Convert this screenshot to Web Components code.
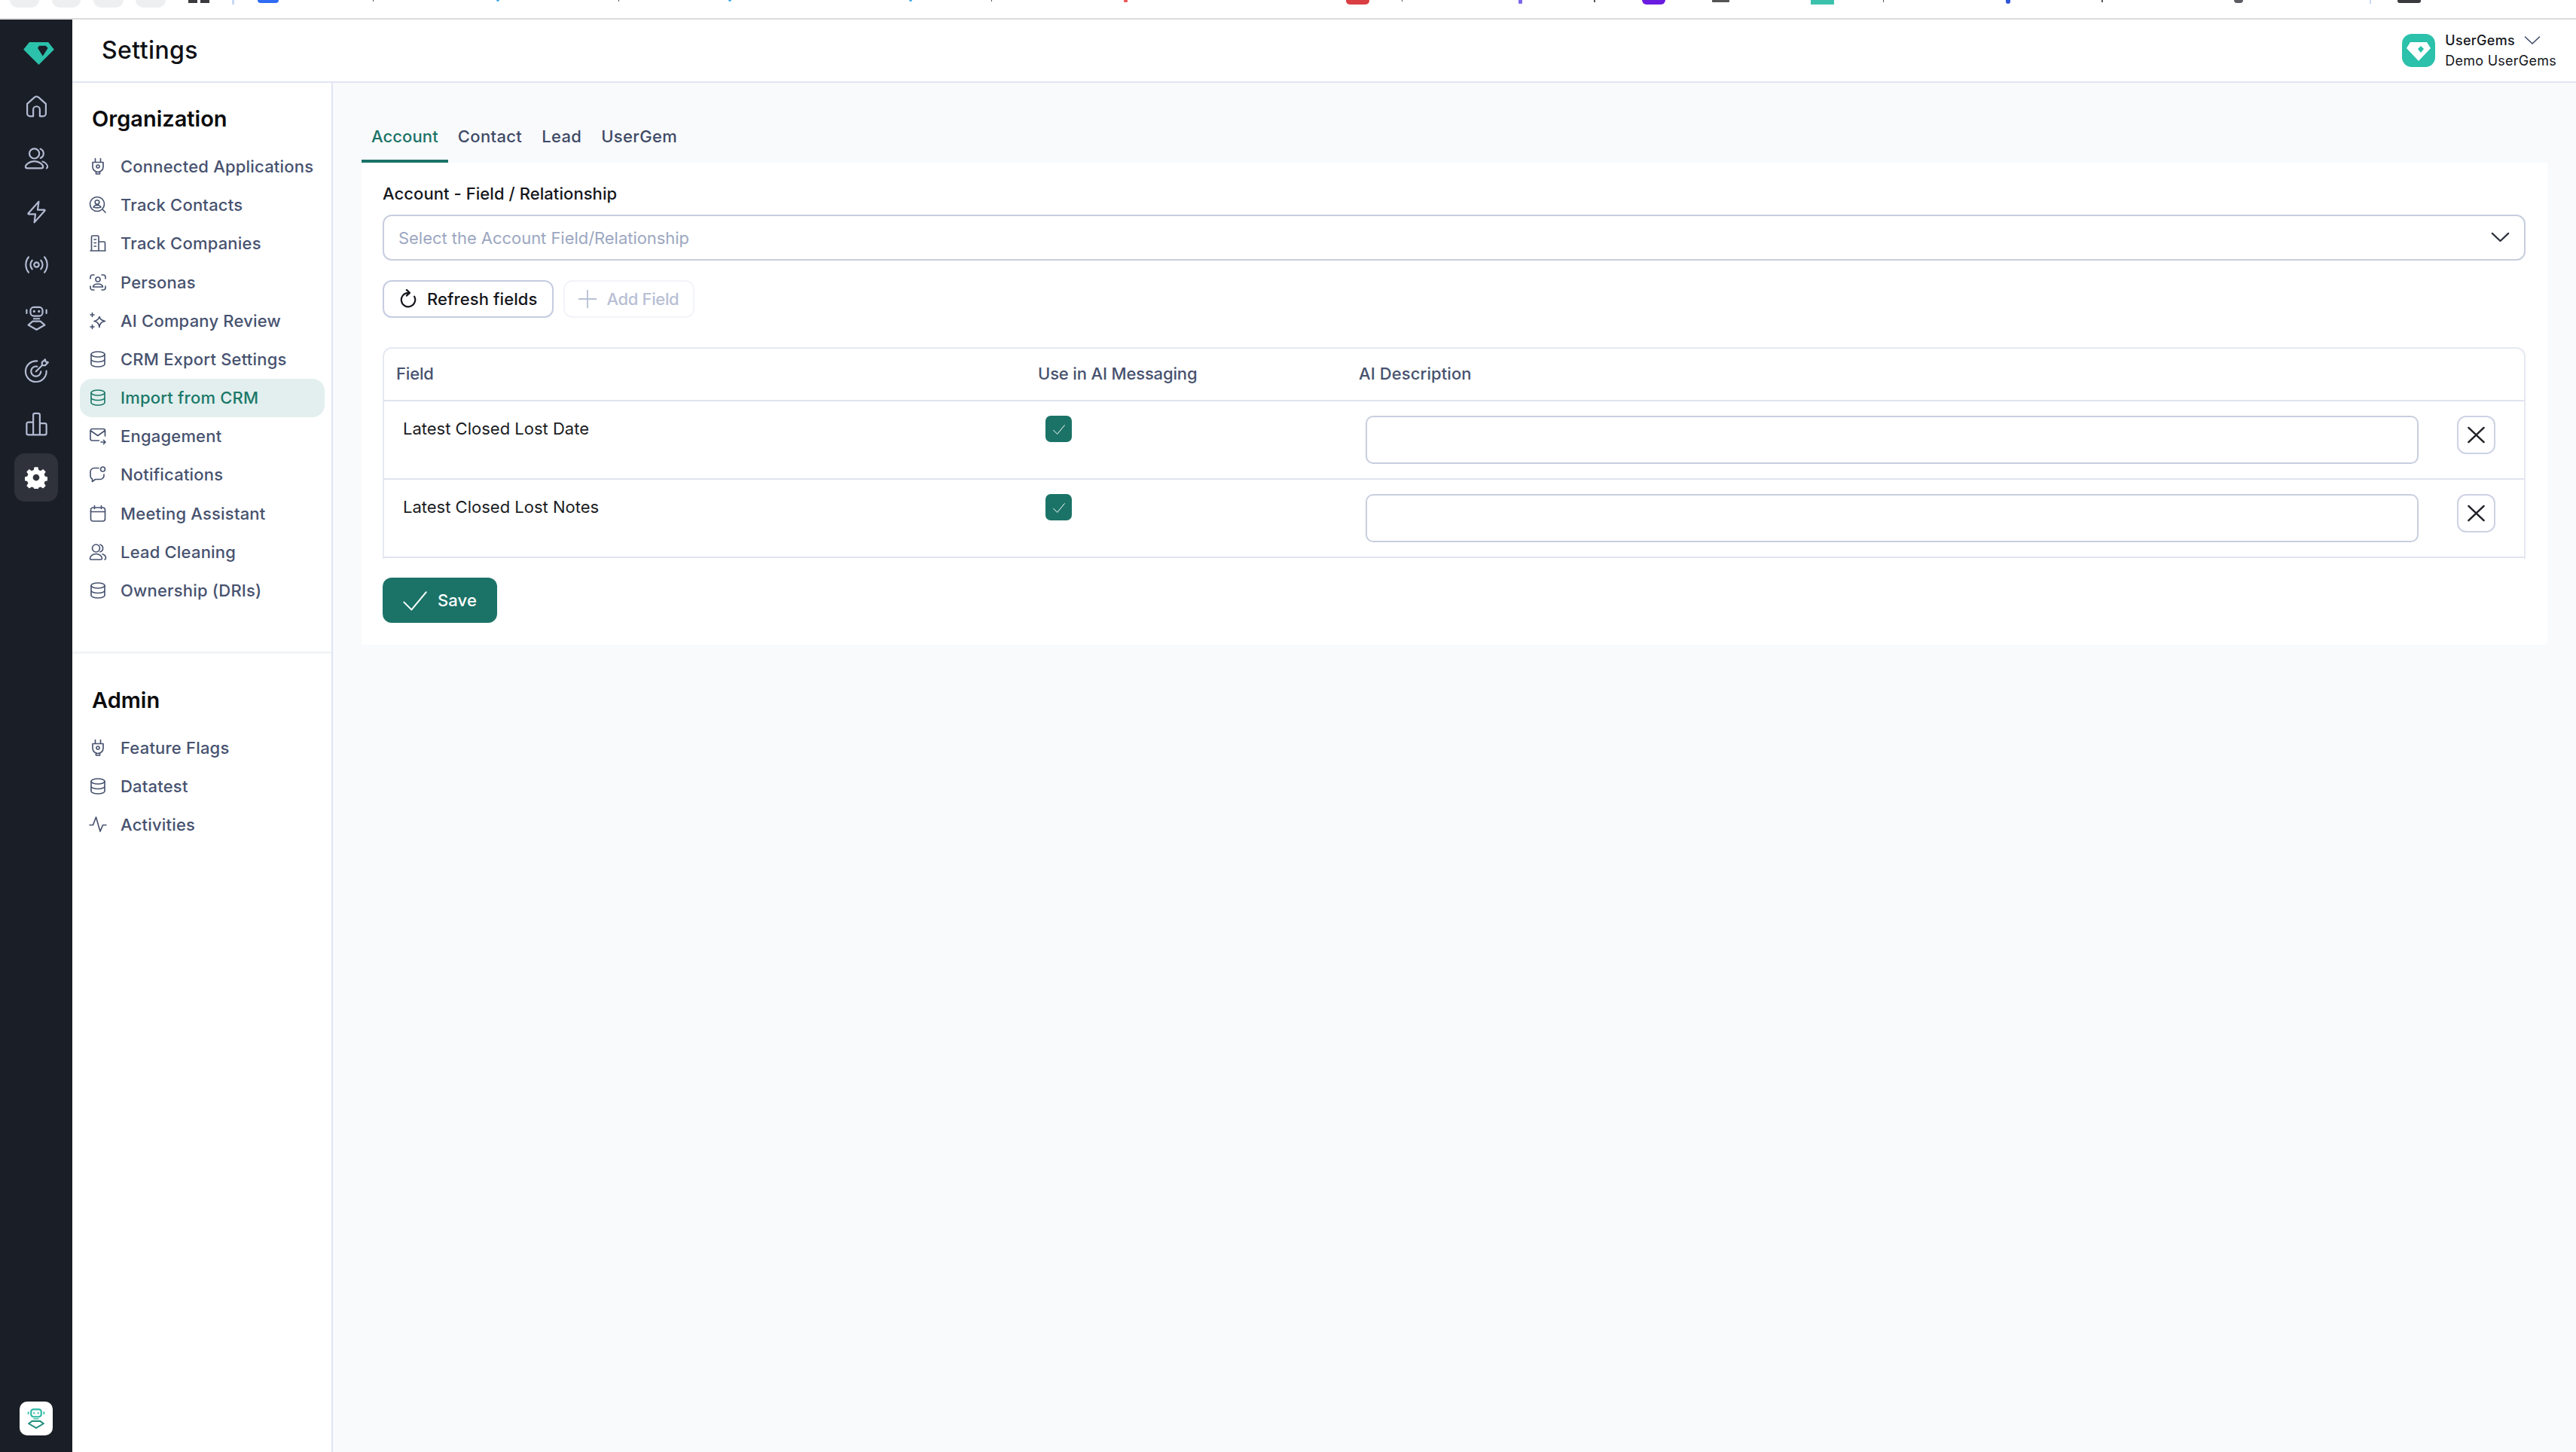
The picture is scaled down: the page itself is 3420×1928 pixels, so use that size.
<!DOCTYPE html>
<html>
<head>
<meta charset="utf-8">
<title>Settings</title>
<style>
    html, body { margin: 0; height: 1928px; overflow: hidden; background: #fff; font-family: Inter, "Noto Sans", sans-serif; }
</style>
</head>
<body>
<app-shell></app-shell>
<script>
const ICONS = {
    home: '<path d="M3.5 10.2 10 4.4a3 3 0 0 1 4 0l6.5 5.8V19a2.5 2.5 0 0 1-2.5 2.5h-3v-6a3 3 0 0 0-6 0v6H6A2.5 2.5 0 0 1 3.500 19z"/>',
    users: '<circle cx="10" cy="7.500" r="4.500"/><path d="M15.500 3.200a4.500 4.500 0 0 1 0 8.400M2 19.500c0-1.500 3-5 8-5s8 3.500 8 5c0 .8-.6 1.300-1.500 1.300h-13C2.600 20.800 2 20.300 2 19.500zM17.500 14.800c2.400.8 4.500 2.800 4.500 4.700 0 .6-.3 1-.8 1.300"/>',
    bolt: '<path d="M14 2.500 4.500 13.200a.5.5 0 0 0 .4.8H11l-1 7.500 9.500-10.700a.5.5 0 0 0-.4-.8H13z"/>',
    radio: '<circle cx="12" cy="12" r="2.200"/><path d="M8 8a6 6 0 0 0 0 8M16 8a6 6 0 0 1 0 8M4.800 5a11 11 0 0 0 0 14M19.200 5a11 11 0 0 1 0 14"/>',
    robot: '<rect x="6.500" y="2" width="11" height="8" rx="3"/><path d="M9.800 5.800h.01M14.200 5.800h.01" stroke-width="2.200"/><path d="M3 4.500v3M21 4.500v3M9.500 12.500h5M8.500 14.800h7l4 3.400-7.500 4.300-7.500-4.300z"/>',
    target: '<path d="M12.500 3a9.500 9.500 0 1 0 8.500 9M12.500 8a4.500 4.500 0 1 0 3.500 4.500M11.500 12.500l5.500-5.500M17 7V4.200L19.800 1.500l.5 2.200 2.200.5L19.800 7z"/>',
    bars: '<path d="M3 11.500A1.500 1.500 0 0 1 4.500 10H9V3.500A1.500 1.500 0 0 1 10.500 2h3A1.500 1.500 0 0 1 15 3.500V11h4.500a1.500 1.500 0 0 1 1.500 1.500V20a1.500 1.500 0 0 1-1.500 1.500h-15A1.500 1.500 0 0 1 3 20zM9 10v11.500M15 11v10.500"/>',
    gear: '<path fill="currentColor" stroke="none" fill-rule="evenodd" d="M10 1.500h4l.6 3 2.200.9 2.600-1.700 2.800 2.800-1.700 2.600.9 2.200 3 .6v4l-3 .6-.9 2.200 1.700 2.600-2.800 2.800-2.600-1.700-2.200.9-.6 3h-4l-.6-3-2.200-.9-2.600 1.700-2.800-2.800 1.700-2.600-.9-2.200-3-.6v-4l3-.6.9-2.200-1.700-2.600 2.800-2.800 2.600 1.700 2.200-.9zM12 9a3.500 3.500 0 1 0 0 7 3.500 3.500 0 0 0 0-7z" transform="translate(0 -.5)"/>',
    plug: '<path d="M8.500 1.500v5M15.500 1.500v5M5 6.500h14v6a7 7 0 0 1-14 0zM9.500 19v3h5v-3"/><circle cx="12" cy="12" r="2"/>',
    contact: '<circle cx="11" cy="11" r="9.500"/><circle cx="11" cy="8.500" r="2.800"/><path d="M6 15c1-2 3-2.500 5-2.500s4 .5 5 2.500c-1.200 1.200-8.800 1.200-10 0zM18 18l4 4"/>',
    building: '<path d="M2 22h20M3.500 22V3.500A1.500 1.500 0 0 1 5 2h6.500A1.500 1.500 0 0 1 13 3.500V22M13 10h7a1.500 1.500 0 0 1 1.500 1.500V22M7 7h2.500M7 11.500h2.500M7 16h2.500"/>',
    face: '<path d="M2 7V5a3 3 0 0 1 3-3h2M17 2h2a3 3 0 0 1 3 3v2M22 17v2a3 3 0 0 1-3 3h-2M7 22H5a3 3 0 0 1-3-3v-2"/><circle cx="12" cy="8" r="3"/><path d="M5.500 18c.5-2.500 3-4 6.500-4s6 1.500 6.500 4z"/>',
    sparkle: '<path d="M14 6.500c.6 3.300 2.500 5.100 7.500 6-5 .9-6.900 2.700-7.500 8-1-5.300-2.500-7.100-7-8 4.500-.9 6-2.700 7-6zM4.500 1.500v5M2 4h5M4.500 17.500v5M2 20h5"/>',
    database: '<ellipse cx="12" cy="5.500" rx="9" ry="3.500"/><path d="M3 5.500v13c0 2 4 3.500 9 3.500s9-1.500 9-3.500v-13M3 12c0 2 4 3.500 9 3.500s9-1.500 9-3.500"/>',
    mail: '<path d="M21.500 12V5a2.500 2.500 0 0 0-2.500-2.500H4.500A2.500 2.500 0 0 0 2 5v10.500A2.500 2.500 0 0 0 4.500 18h9M2.500 5l9.300 6.500L21 5M16 20h6M19.500 17.500 22 20l-2.500 2.500"/>',
    chat: '<path d="M13 3.500H7A5 5 0 0 0 2 8.500V14c0 1.800 1 3.200 2.500 4v3.500l4-3h6.500a5 5 0 0 0 5-5V12"/><circle cx="18.500" cy="5" r="3"/>',
    calendar: '<rect x="2.500" y="4" width="19" height="18" rx="3"/><path d="M2.500 9.500h19M7.500 1.500v4M16.500 1.500v4"/>',
    people: '<circle cx="9.500" cy="7" r="5"/><path d="M15 2.200a5 5 0 0 1 0 9.600M1.500 20.500c0-2.500 3-6 8-6s8 3.500 8 6c0 1-.6 1.500-1.500 1.500H3c-.9 0-1.500-.5-1.500-1.500zM18 14.800c2.500.8 4.500 3 4.500 5.200 0 1-.5 1.700-1.500 2"/>',
    activity: '<path d="M1 12.500h4.500L9.500 2 15 21l3.500-8.500H23"/>',
    refresh: '<path d="M12 4.500a8.500 8.500 0 1 0 7.500 4.500M10 .8 13.800 4.500 10 8"/>',
    plus: '<path d="M12 1.500v21M1.500 12h21"/>',
    chevron: '<path d="M2.500 7 12 16 21.500 7"/>',
    close: '<path d="M3 3.500 21 20.500M21 3.500 3 20.500"/>',
    check: '<path d="M1 14 8.500 21.500 23 4"/>'
};

class AppIcon extends HTMLElement {
    connectedCallback() {
        const size = this.getAttribute('size') || 22;
        const stroke = this.getAttribute('stroke') || 2;
        this.attachShadow({ mode: 'open' }).innerHTML = `
        <style>
            :host { display: inline-flex; flex: none; width: ${size}px; height: ${size}px; }
            svg { width: 100%; height: 100%; display: block; }
        </style>
        <svg viewBox="0 0 24 24" fill="none" stroke="currentColor" stroke-width="${stroke}" stroke-linecap="round" stroke-linejoin="round">${ICONS[this.getAttribute('name')]}</svg>`;
    }
}

/* what is left of the browser bar above the app, cut off by the screenshot */
class BrowserStrip extends HTMLElement {
    connectedCallback() {
        const bits = [
            [13, 39, 10, '#eeeff1', 20], [69, 38, 10, '#eeeff1', 20], [124, 40, 10, '#eeeff1', 20], [180, 40, 10, '#eeeff1', 20],
            [250, 12, 4, '#3b3b3f', 0], [266, 12, 4, '#3b3b3f', 0], [308, 3, 6, '#c9d8f5', 0], [342, 28, 4, '#2f6bf5', 4],
            [495, 1, 2, '#555', 0], [659, 4, 2, '#3aa7ee', 2], [821, 1, 2, '#555', 0], [967, 4, 2, '#3aa7ee', 2],
            [1207, 4, 2, '#3aa7ee', 2], [1316, 1, 2, '#555', 0], [1492, 5, 3, '#ee5a5a', 1], [1787, 31, 6, '#d93f42', 5],
            [1861, 1, 2, '#555', 0], [2016, 5, 5, '#7a68ee', 1], [2116, 2, 3, '#555', 0], [2180, 31, 6, '#6a1be0', 6],
            [2273, 23, 3, '#555', 1], [2404, 31, 6, '#3cc2ac', 0], [2500, 1, 3, '#555', 0], [2663, 6, 5, '#2f56d8', 3],
            [2790, 2, 3, '#555', 0], [2966, 12, 4, '#5b5d63', 5], [3146, 2, 5, '#c9d8f5', 0], [3183, 31, 4, '#3b3b3f', 3]
        ];
        let x = 0;
        const html = bits.map(([left, w, h, color, r]) => {
            const gap = left - x;
            x = left + w;
            return `<i style="margin-left:${gap}px;width:${w}px;height:${h}px;background:${color};border-radius:0 0 ${r}px ${r}px"></i>`;
        }).join('');
        this.attachShadow({ mode: 'open' }).innerHTML = `
        <style>
            :host { display: flex; align-items: flex-start; height: 24px; background: #fff; border-bottom: 2px solid #dcdcdc; }
            i { display: block; flex: none; }
        </style>${html}`;
    }
}

class IconRail extends HTMLElement {
    connectedCallback() {
        const items = ['home', 'users', 'bolt', 'radio', 'robot', 'target', 'bars'];
        this.attachShadow({ mode: 'open' }).innerHTML = `
        <style>
            :host { display: flex; flex-direction: column; align-items: center; flex: none; width: 96px; background: #1a1e27; color: #b4bcd3; }
            .logo { width: 41px; height: 30px; margin: 30px 0 19px 6px; display: block; }
            .slot { height: 70.500px; width: 58px; display: flex; align-items: center; justify-content: center; }
            .active { height: 64px; margin-top: 3px; background: #2f323b; border-radius: 14px; color: #fff; }
            .bot { margin-top: auto; margin-bottom: 22px; width: 44px; height: 45px; border-radius: 10px; background: #fff; display: flex; align-items: center; justify-content: center; }
            .bot svg { width: 24px; height: 27px; }
        </style>
        <svg class="logo" viewBox="0 0 42 31">
            <path fill="#2bc1ab" d="M8 0h26l8 10-21 21L0 10z"/>
            <path fill="#1a1e27" d="M22 5h9l3 3-7 11-7-11z" transform="translate(-.5 0)"/>
        </svg>
        ${items.map(n => `<div class="slot"><app-icon name="${n}" size="35" stroke="1.500"></app-icon></div>`).join('')}
        <div class="slot active"><app-icon name="gear" size="30"></app-icon></div>
        <div class="bot">
            <svg viewBox="0 0 26 30" fill="none" stroke="#1f9a8a" stroke-linejoin="round">
                <rect x="5.500" y="1.500" width="15" height="11" rx="3.500" stroke="#2fb8a4" stroke-width="2.400"/>
                <path d="M10 7h.01M16 7h.01" stroke="#2fb8a4" stroke-width="2.600" stroke-linecap="round"/>
                <path d="M1.500 5v4M24.500 5v4" stroke="#4cc7b4" stroke-width="2.400"/>
                <path d="M9 15.500h8" stroke="#62c9b8" stroke-width="2"/>
                <path d="M7 19h12l5 3.500-11 6.500-11-6.500z" stroke="#1f8d7e" stroke-width="2.200"/>
            </svg>
        </div>`;
    }
}

class PageHeader extends HTMLElement {
    connectedCallback() {
        this.attachShadow({ mode: 'open' }).innerHTML = `
        <style>
            :host { display: flex; align-items: center; justify-content: space-between; height: 82px; padding: 0 26px 0 39px; background: #fff; border-bottom: 2px solid #e0e5f2; }
            h1 { margin: 0; font: 500 32px/40px Inter, sans-serif; color: #0f1115; letter-spacing: .4px; }
            .who { display: flex; align-items: center; gap: 13px; }
            .who > svg { width: 44px; height: 44px; display: block; }
            .name { display: flex; align-items: center; gap: 11px; font: 500 18px/24px Inter, sans-serif; color: #14161c; letter-spacing: .3px; }
            .org { font: 400 18px/24px Inter, sans-serif; color: #14161c; letter-spacing: .25px; margin-top: 3px; }
            app-icon { color: #3f4a66; }
        </style>
        <h1>Settings</h1>
        <div class="who">
            <svg viewBox="0 0 44 44">
                <rect width="44" height="44" rx="13" fill="#2bc1ab"/>
                <path fill="#fff" d="M11 11h22l5 8-16 17L6 19z"/>
                <path fill="#2bc1ab" d="M25 16l4 4-4 5-4-5z"/>
            </svg>
            <div>
                <div class="name">UserGems <app-icon name="chevron" size="24" stroke="1.600"></app-icon></div>
                <div class="org">Demo UserGems</div>
            </div>
        </div>`;
    }
}

class NavItem extends HTMLElement {
    connectedCallback() {
        this.attachShadow({ mode: 'open' }).innerHTML = `
        <style>
            :host { display: flex; align-items: center; gap: 18px; height: 51.200px; padding-left: 12px; border-radius: 16px; color: #47526f; font: 500 22px/30px Inter, sans-serif; letter-spacing: .2px; white-space: nowrap; }
            :host([active]) { background: #e2efee; color: #1b7869; }
        </style>
        <app-icon name="${this.getAttribute('icon')}" size="24" stroke="1.650"></app-icon>
        <slot></slot>`;
    }
}

class NavGroup extends HTMLElement {
    connectedCallback() {
        this.attachShadow({ mode: 'open' }).innerHTML = `
        <style>
            :host { display: block; padding: 0 9px 0 10px; }
            h2 { margin: 0 0 19.400px 16px; font: 600 29px/36px Inter, sans-serif; color: #0b0b0d; letter-spacing: 0; }
        </style>
        <h2>${this.getAttribute('title')}</h2>
        <slot></slot>`;
    }
}

class SettingsNav extends HTMLElement {
    connectedCallback() {
        this.attachShadow({ mode: 'open' }).innerHTML = `
        <style>
            :host { display: block; flex: none; width: 344px; padding-top: 30px; box-sizing: content-box; background: #fff; border-right: 2px solid #e0e4f6; }
            hr { border: 0; height: 3px; background: #f3f4f6; margin: 55px 0 44px; }
        </style>
        <nav-group title="Organization">
            <nav-item icon="plug">Connected Applications</nav-item>
            <nav-item icon="contact">Track Contacts</nav-item>
            <nav-item icon="building">Track Companies</nav-item>
            <nav-item icon="face">Personas</nav-item>
            <nav-item icon="sparkle">AI Company Review</nav-item>
            <nav-item icon="database">CRM Export Settings</nav-item>
            <nav-item icon="database" active>Import from CRM</nav-item>
            <nav-item icon="mail">Engagement</nav-item>
            <nav-item icon="chat">Notifications</nav-item>
            <nav-item icon="calendar">Meeting Assistant</nav-item>
            <nav-item icon="people">Lead Cleaning</nav-item>
            <nav-item icon="database">Ownership (DRIs)</nav-item>
        </nav-group>
        <hr>
        <nav-group title="Admin">
            <nav-item icon="plug">Feature Flags</nav-item>
            <nav-item icon="database">Datatest</nav-item>
            <nav-item icon="activity">Activities</nav-item>
        </nav-group>`;
    }
}

class TabBar extends HTMLElement {
    connectedCallback() {
        const tabs = ['Account', 'Contact', 'Lead', 'UserGem'];
        this.attachShadow({ mode: 'open' }).innerHTML = `
        <style>
            :host { display: flex; height: 66px; font: 500 22px/30px Inter, sans-serif; letter-spacing: .35px; color: #3f4a66; }
            span { height: 66px; padding: 0 13px 4px; display: flex; align-items: center; box-sizing: border-box; }
            .on { color: #1b7367; padding-bottom: 0; letter-spacing: .1px; border-bottom: 4px solid #1b7367; }
        </style>
        ${tabs.map((t, i) => `<span class="${i ? '' : 'on'}">${t}</span>`).join('')}`;
    }
}

class FieldPicker extends HTMLElement {
    connectedCallback() {
        this.attachShadow({ mode: 'open' }).innerHTML = `
        <style>
            :host { display: block; }
            label { display: block; font: 500 22px/30px Inter, sans-serif; letter-spacing: .07px; color: #15171c; margin-bottom: 13px; }
            .select { display: flex; align-items: center; justify-content: space-between; box-sizing: border-box; height: 61px; padding: 0 18px 0 19px; background: #fff; border: 2px solid #c7cede; border-radius: 12px; font: 400 22px/30px Inter, sans-serif; letter-spacing: -.04px; color: #9ca7c1; }
            app-icon { color: #2d323c; }
        </style>
        <label>Account - Field / Relationship</label>
        <div class="select">Select the Account Field/Relationship <app-icon name="chevron" size="27" stroke="2"></app-icon></div>`;
    }
}

class ActionButton extends HTMLElement {
    connectedCallback() {
        this.attachShadow({ mode: 'open' }).innerHTML = `
        <style>
            :host { display: inline-flex; align-items: center; box-sizing: border-box; height: 50px; padding: 0 20px 0 19px; gap: 12px; background: #fff; border: 2px solid #c6cde0; border-radius: 12px; font: 500 22px/30px Inter, sans-serif; letter-spacing: .1px; color: #14161b; white-space: nowrap; }
            :host([disabled]) { border-color: #f2f4f8; color: #b8c0d4; gap: 12px; padding: 0 19px 0 17px; letter-spacing: -.35px; }
            :host([primary]) { height: 60px; padding: 0 27px 0 27px; gap: 14px; border: 0; background: #1b7367; color: #fff; }
        </style>
        <app-icon name="${this.getAttribute('icon')}" size="${this.getAttribute('icon-size') || 26}" stroke="${this.getAttribute('stroke') || 2}"></app-icon>
        <slot></slot>`;
    }
}

class FieldRow extends HTMLElement {
    connectedCallback() {
        this.attachShadow({ mode: 'open' }).innerHTML = `
        <style>
            :host { display: grid; grid-template-columns: 860px 426px 1fr 140px; box-sizing: border-box; height: 104px; border-bottom: 2px solid #e0e4ef; padding-top: 19px; font: 400 22px/34px Inter, sans-serif; letter-spacing: 0; color: #1b1d23; }
            .name { padding-left: 25px; }
            .box { width: 35px; height: 35px; margin-left: 18px; border-radius: 7px; background: #1b7367; color: #fff; display: flex; align-items: center; justify-content: center; }
            .desc { margin-left: 17px; height: 64px; box-sizing: border-box; background: #fff; border: 2px solid #c7cede; border-radius: 10px; }
            .del { margin-left: 51px; width: 51px; height: 51px; box-sizing: border-box; background: #fff; border: 2px solid #cdd3e4; border-radius: 12px; display: flex; align-items: center; justify-content: center; color: #1f2126; }
        </style>
        <div class="name"><slot></slot></div>
        <div><div class="box"><app-icon name="check" size="16" stroke="1.500"></app-icon></div></div>
        <div class="desc"></div>
        <div><div class="del"><app-icon name="close" size="27" stroke="2.200"></app-icon></div></div>`;
    }
}

class FieldTable extends HTMLElement {
    connectedCallback() {
        this.attachShadow({ mode: 'open' }).innerHTML = `
        <style>
            :host { display: block; box-sizing: border-box; height: 281px; background: #fff; border: 2px solid #e6e9f2; border-bottom: 0; border-radius: 12px 12px 0 0; }
            .head { display: grid; grid-template-columns: 860px 426px 1fr 140px; align-items: center; box-sizing: border-box; height: 70px; padding-bottom: 2px; border-bottom: 2px solid #e0e4ef; font: 500 22px/30px Inter, sans-serif; letter-spacing: -.15px; color: #47526f; }
            .head span { padding-left: 8px; }
            .head span:first-child { padding-left: 16px; }
            .head span:nth-child(3) { letter-spacing: .1px; }
        </style>
        <div class="head"><span>Field</span><span>Use in AI Messaging</span><span>AI Description</span><span></span></div>
        <slot></slot>`;
    }
}

class SettingsCard extends HTMLElement {
    connectedCallback() {
        this.attachShadow({ mode: 'open' }).innerHTML = `
        <style>
            :host { display: block; box-sizing: border-box; height: 640px; padding: 26px 29px 0 28px; background: #fff; }
            .actions { display: flex; gap: 13px; margin: 26px 0 39px; }
            .save { margin-top: 25px; }
        </style>
        <field-picker></field-picker>
        <div class="actions">
            <action-button icon="refresh">Refresh fields</action-button>
            <action-button icon="plus" disabled stroke="1.700">Add Field</action-button>
        </div>
        <field-table>
            <field-row>Latest Closed Lost Date</field-row>
            <field-row>Latest Closed Lost Notes</field-row>
        </field-table>
        <div class="save"><action-button icon="check" primary icon-size="32" stroke="1.500">Save</action-button></div>`;
    }
}

class AppShell extends HTMLElement {
    connectedCallback() {
        this.attachShadow({ mode: 'open' }).innerHTML = `
        <style>
            :host { display: flex; flex-direction: column; height: 1928px; }
            .body { flex: 1; display: flex; min-height: 0; }
            .main { flex: 1; display: flex; flex-direction: column; min-width: 0; }
            .split { flex: 1; display: flex; min-height: 0; }
            .content { flex: 1; min-width: 0; padding: 40px 38px 0 38px; background: #f9fafc; box-sizing: border-box; }
        </style>
        <browser-strip></browser-strip>
        <div class="body">
            <icon-rail></icon-rail>
            <div class="main">
                <page-header></page-header>
                <div class="split">
                    <settings-nav></settings-nav>
                    <div class="content">
                        <tab-bar></tab-bar>
                        <settings-card></settings-card>
                    </div>
                </div>
            </div>
        </div>`;
    }
}

customElements.define('app-icon', AppIcon);
customElements.define('browser-strip', BrowserStrip);
customElements.define('icon-rail', IconRail);
customElements.define('page-header', PageHeader);
customElements.define('nav-item', NavItem);
customElements.define('nav-group', NavGroup);
customElements.define('settings-nav', SettingsNav);
customElements.define('tab-bar', TabBar);
customElements.define('field-picker', FieldPicker);
customElements.define('action-button', ActionButton);
customElements.define('field-row', FieldRow);
customElements.define('field-table', FieldTable);
customElements.define('settings-card', SettingsCard);
customElements.define('app-shell', AppShell);
</script>
</body>
</html>
